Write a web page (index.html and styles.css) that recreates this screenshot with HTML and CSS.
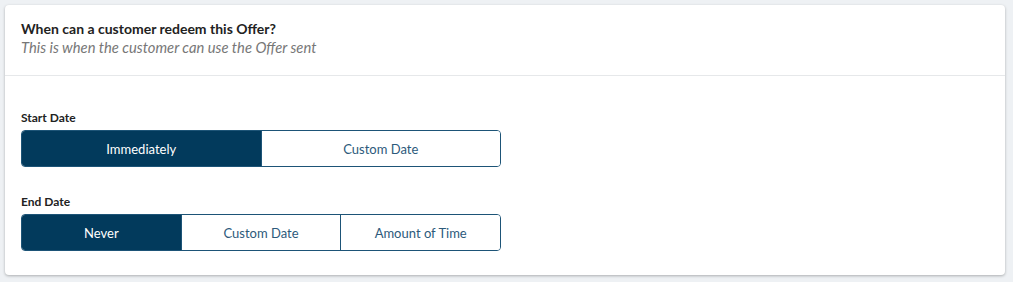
FILE: index.html
```html
<!DOCTYPE html>
<html>
<head>
<meta charset="utf-8">
<link rel="stylesheet" href="styles.css">
</head>
<body>
<div class="card">
  <div class="card-header">
    <div class="title">When can a customer redeem this Offer?</div>
    <div class="subtitle">This is when the customer can use the Offer sent</div>
  </div>
  <div class="card-body">
    <div class="field">
      <div class="label">Start Date</div>
      <div class="seg">
        <div class="opt active">Immediately</div>
        <div class="opt">Custom Date</div>
      </div>
    </div>
    <div class="field">
      <div class="label">End Date</div>
      <div class="seg">
        <div class="opt active">Never</div>
        <div class="opt">Custom Date</div>
        <div class="opt">Amount of Time</div>
      </div>
    </div>
  </div>
</div>
</body>
</html>
```
FILE: styles.css
```css
html, body { margin: 0; padding: 0; }
body {
  background: #eef1f4;
  font-family: Lato, "Open Sans", sans-serif;
  padding: 5px;
  width: 1000px;
}
.card {
  background: #fff;
  border-radius: 4px;
  box-shadow: 0 1px 3px rgba(0,0,0,0.28);
  height: 270px;
  box-sizing: border-box;
}
.card-header {
  padding: 15px 16px 19px;
  border-bottom: 1px solid #e6e8ea;
}
.title {
  font-size: 14px;
  line-height: 18px;
  font-weight: 700;
  color: #222;
}
.subtitle {
  font-size: 14.75px;
  line-height: 18px;
  font-style: italic;
  color: #777;
}
.card-body {
  padding: 34px 16px 0;
  display: flex;
  flex-direction: column;
  gap: 27px;
}
.label {
  font-size: 12px;
  line-height: 15px;
  font-weight: 700;
  color: #222;
  margin-bottom: 5px;
}
.seg {
  display: flex;
  width: 480px;
  height: 37px;
  box-sizing: border-box;
  border: 1px solid #1d5477;
  border-radius: 4px;
  overflow: hidden;
}
.opt {
  flex: 1;
  display: flex;
  align-items: center;
  justify-content: center;
  font-size: 13px;
  color: #2d5a7b;
  background: #fff;
}
.opt + .opt { border-left: 1px solid #1d5477; }
.opt.active {
  background: #023a5c;
  color: #fff;
}
```
